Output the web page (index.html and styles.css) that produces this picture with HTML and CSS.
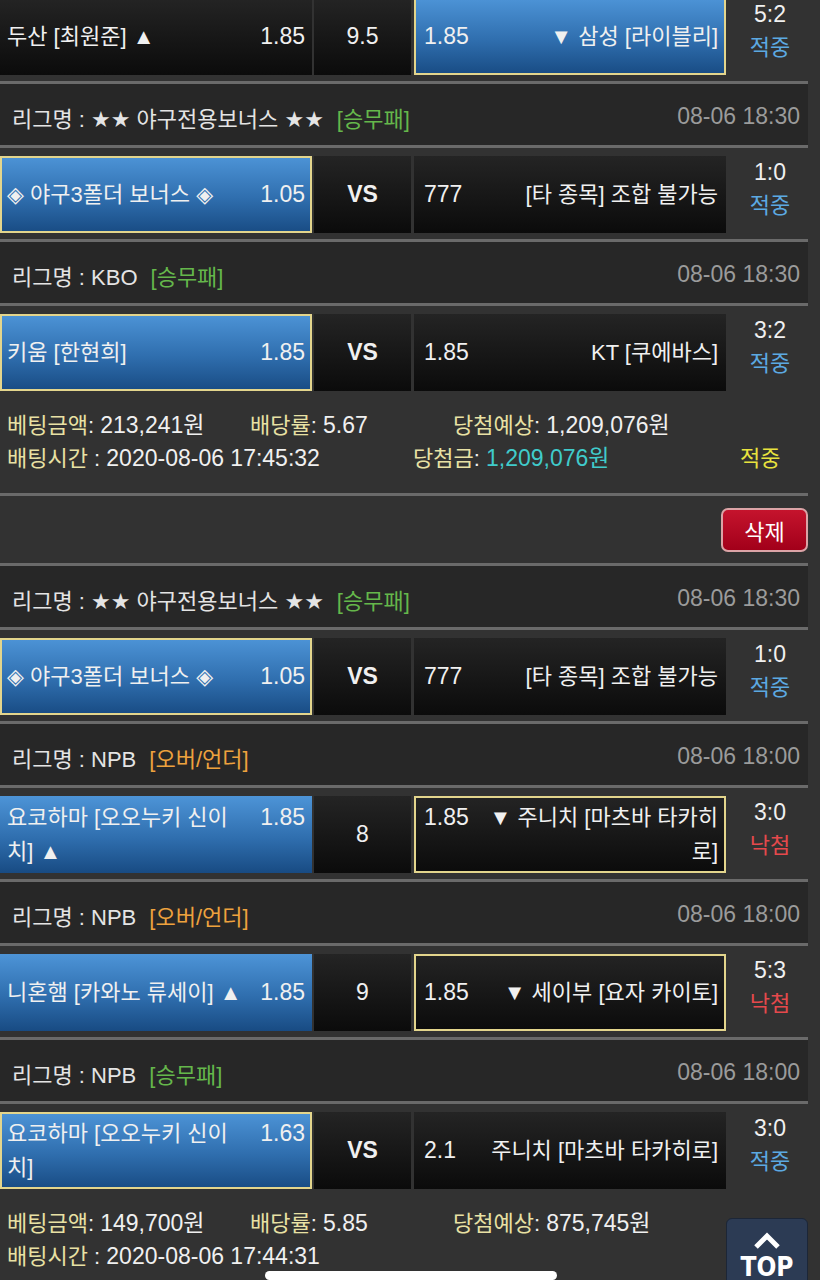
FILE: index.html
```html
<!DOCTYPE html>
<html lang="ko">

<head>
    <meta charset="utf-8">
    <meta name="viewport" content="width=device-width, initial-scale=1.0">
    <title>배팅내역</title>
    <link rel="stylesheet" href="styles.css">
</head>

<body>
    <div id="container">
        <!-- kupon 1 (toppen er scrollet op) -->
        <div class="game first">
            <div class="cell home">
                <div class="line"><span class="name">두산 [최원준] ▲</span><span class="odds num">1.85</span></div>
            </div>
            <div class="cell mid num">9.5</div>
            <div class="cell away win pick">
                <div class="line"><span class="odds num">1.85</span><span class="name">▼ 삼성 [라이블리]</span></div>
            </div>
            <div class="score"><span class="num">5:2</span><br><span class="hit">적중</span></div>
        </div>

        <div class="league">
            <div>리그명 : ★★ 야구전용보너스 ★★<span class="tag wdl">[승무패]</span></div>
            <div class="date num">08-06 18:30</div>
        </div>
        <div class="game">
            <div class="cell home win pick">
                <div class="line"><span class="name">◈ 야구3폴더 보너스 ◈</span><span class="odds num">1.05</span></div>
            </div>
            <div class="cell mid vs num">VS</div>
            <div class="cell away">
                <div class="line"><span class="odds num">777</span><span class="name">[타 종목] 조합 불가능</span></div>
            </div>
            <div class="score"><span class="num">1:0</span><br><span class="hit">적중</span></div>
        </div>

        <div class="league">
            <div>리그명 : KBO<span class="tag wdl">[승무패]</span></div>
            <div class="date num">08-06 18:30</div>
        </div>
        <div class="game">
            <div class="cell home win pick">
                <div class="line"><span class="name">키움 [한현희]</span><span class="odds num">1.85</span></div>
            </div>
            <div class="cell mid vs num">VS</div>
            <div class="cell away">
                <div class="line"><span class="odds num">1.85</span><span class="name">KT [쿠에바스]</span></div>
            </div>
            <div class="score"><span class="num">3:2</span><br><span class="hit">적중</span></div>
        </div>

        <!-- opsummering af kupon 1 -->
        <div class="info">
            <div class="row">
                <div class="c1"><span class="label">베팅금액</span>: <span class="num">213,241원</span></div>
                <div class="c2"><span class="label">배당률</span>: <span class="num">5.67</span></div>
                <div><span class="label">당첨예상</span>: <span class="num">1,209,076원</span></div>
            </div>
            <div class="row">
                <div class="t1"><span class="label">배팅시간</span> : <span class="num">2020-08-06 17:45:32</span></div>
                <div class="t2"><span class="label">당첨금</span>: <span class="num cyan">1,209,076원</span></div>
                <div class="yellow">적중</div>
            </div>
        </div>

        <div class="tools">
            <button class="del">삭제</button>
        </div>

        <!-- kupon 2 -->
        <div class="league">
            <div>리그명 : ★★ 야구전용보너스 ★★<span class="tag wdl">[승무패]</span></div>
            <div class="date num">08-06 18:30</div>
        </div>
        <div class="game">
            <div class="cell home win pick">
                <div class="line"><span class="name">◈ 야구3폴더 보너스 ◈</span><span class="odds num">1.05</span></div>
            </div>
            <div class="cell mid vs num">VS</div>
            <div class="cell away">
                <div class="line"><span class="odds num">777</span><span class="name">[타 종목] 조합 불가능</span></div>
            </div>
            <div class="score"><span class="num">1:0</span><br><span class="hit">적중</span></div>
        </div>

        <div class="league">
            <div>리그명 : NPB<span class="tag ou">[오버/언더]</span></div>
            <div class="date num">08-06 18:00</div>
        </div>
        <div class="game">
            <div class="cell home win">
                <div class="line"><span class="name">요코하마 [오오누키 신이치] ▲</span><span class="odds num">1.85</span></div>
            </div>
            <div class="cell mid num">8</div>
            <div class="cell away pick">
                <div class="line"><span class="odds num">1.85</span><span class="name">▼ 주니치 [마츠바 타카히로]</span></div>
            </div>
            <div class="score"><span class="num">3:0</span><br><span class="miss">낙첨</span></div>
        </div>

        <div class="league">
            <div>리그명 : NPB<span class="tag ou">[오버/언더]</span></div>
            <div class="date num">08-06 18:00</div>
        </div>
        <div class="game">
            <div class="cell home win">
                <div class="line"><span class="name">니혼햄 [카와노 류세이] ▲</span><span class="odds num">1.85</span></div>
            </div>
            <div class="cell mid num">9</div>
            <div class="cell away pick">
                <div class="line"><span class="odds num">1.85</span><span class="name">▼ 세이부 [요자 카이토]</span></div>
            </div>
            <div class="score"><span class="num">5:3</span><br><span class="miss">낙첨</span></div>
        </div>

        <div class="league">
            <div>리그명 : NPB<span class="tag wdl">[승무패]</span></div>
            <div class="date num">08-06 18:00</div>
        </div>
        <div class="game">
            <div class="cell home win pick">
                <div class="line"><span class="name">요코하마 [오오누키 신이치]</span><span class="odds num">1.63</span></div>
            </div>
            <div class="cell mid vs num">VS</div>
            <div class="cell away">
                <div class="line"><span class="odds num">2.1</span><span class="name">주니치 [마츠바 타카히로]</span></div>
            </div>
            <div class="score"><span class="num">3:0</span><br><span class="hit">적중</span></div>
        </div>

        <div class="info">
            <div class="row">
                <div class="c1"><span class="label">베팅금액</span>: <span class="num">149,700원</span></div>
                <div class="c2"><span class="label">배당률</span>: <span class="num">5.85</span></div>
                <div><span class="label">당첨예상</span>: <span class="num">875,745원</span></div>
            </div>
            <div class="row">
                <div class="t1"><span class="label">배팅시간</span> : <span class="num">2020-08-06 17:44:31</span></div>
            </div>
        </div>
    </div>

    <!-- knap til toppen -->
    <div class="top">
        <svg width="26" height="18" viewBox="0 0 26 18">
            <polyline points="2,15 13,4 24,15" fill="none" stroke="#fff" stroke-width="5" />
        </svg>
        <span>TOP</span>
    </div>

    <div class="homebar"></div>
</body>

</html>
```

FILE: styles.css
```css
body {
    margin: 0;
    height: 1280px;
    overflow: hidden;
    background-color: #323232;
    font-family: "Liberation Sans", "DejaVu Sans", "Noto Sans CJK KR", sans-serif;
    font-size: 22px;
    color: #f0f0f0;
}

#container {
    width: 808px;
}

/* tal og datoer er lidt bredere i originalen */
.num {
    font-size: 23px;
}

/* kamp-raekke */
.game {
    display: flex;
    align-items: flex-start;
    border-top: 3px solid #6a6a6a;
    padding: 8px 0 6px;
}

.first {
    margin-top: -13px;
}

.cell {
    box-sizing: border-box;
    height: 77px;
    display: flex;
    align-items: center;
    padding: 0 7px;
    background: linear-gradient(#242424, #0b0b0b);
}

.home {
    width: 312px;
}

.mid {
    width: 97px;
    margin-left: 2px;
    justify-content: center;
}

.away {
    width: 312px;
    margin-left: 3px;
    padding: 0 8px 0 10px;
}

.win {
    background: linear-gradient(#4d94d7, #2f6eae 55%, #184b83);
}

.pick {
    box-shadow: inset 0 0 0 2px #e3d58c;
}

.vs {
    font-weight: bold;
}

.line {
    display: flex;
    align-items: baseline;
    width: 100%;
    line-height: 34px;
}

.name {
    flex: 1;
}

.home .odds {
    margin-left: 9px;
}

.away .odds {
    margin-right: 8px;
}

.away .name {
    text-align: right;
}

.score {
    flex: 1;
    height: 77px;
    overflow: hidden;
    padding-left: 6px;
    text-align: center;
    line-height: 33px;
}

.hit {
    color: #5ca9e2;
}

.miss {
    color: #e5494c;
}

/* liga-linje */
.league {
    display: flex;
    align-items: center;
    justify-content: space-between;
    height: 57px;
    padding: 4px 8px 0 12px;
    border-top: 3px solid #6a6a6a;
    background-color: #272727;
    color: #e4e4e4;
}

.tag {
    margin-left: 13px;
}

.wdl {
    color: #65b74b;
}

.ou {
    color: #eea23e;
}

.date {
    color: #9b9b9b;
}

/* opsummering */
.info {
    padding: 12px 0 18px 7px;
    line-height: 33px;
}

.row {
    display: flex;
    height: 33px;
}

.c1 {
    width: 243px;
}

.c2 {
    width: 203px;
}

.t1 {
    width: 406px;
}

.t2 {
    width: 327px;
}

.label {
    color: #e8e1a4;
}

.cyan {
    color: #40cbcb;
}

.yellow {
    color: #e9e33e;
}

.tools {
    display: flex;
    justify-content: flex-end;
    border-top: 3px solid #6a6a6a;
    padding: 12px 0 11px;
}

.del {
    width: 87px;
    height: 44px;
    box-sizing: border-box;
    border: 2px solid #dba3a6;
    border-radius: 7px;
    background: linear-gradient(#c5142d, #a2001a);
    color: #ffffff;
    font-family: "Liberation Sans", "Noto Sans CJK KR", sans-serif;
    font-size: 22px;
    padding: 0;
}

.top {
    position: fixed;
    left: 726px;
    top: 1218px;
    width: 82px;
    height: 72px;
    box-sizing: border-box;
    border: 1px solid #1c2637;
    border-radius: 6px;
    background-color: #2c3b54;
    text-align: center;
}

.top svg {
    display: block;
    margin: 13px auto 0;
}

.top span {
    display: block;
    margin-top: 3px;
    font-family: "DejaVu Sans Condensed", "DejaVu Sans", sans-serif;
    font-weight: bold;
    font-size: 26px;
    line-height: 28px;
    color: #ffffff;
}

.homebar {
    position: fixed;
    left: 265px;
    bottom: 0;
    width: 292px;
    height: 9px;
    border-radius: 5px;
    background-color: #ffffff;
}
```
